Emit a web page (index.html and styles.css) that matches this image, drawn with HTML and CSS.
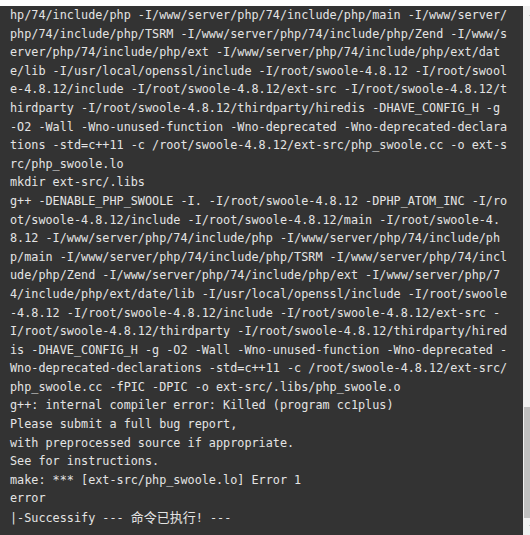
FILE: index.html
```html
<!DOCTYPE html>
<html lang="zh">
<head>
<meta charset="utf-8">
<title>Terminal</title>
<link rel="stylesheet" href="styles.css">
</head>
<body>
<div class="frame">
  <div class="term">
<pre class="log">hp/74/include/php -I/www/server/php/74/include/php/main -I/www/server/
php/74/include/php/TSRM -I/www/server/php/74/include/php/Zend -I/www/s
erver/php/74/include/php/ext -I/www/server/php/74/include/php/ext/dat
e/lib -I/usr/local/openssl/include -I/root/swoole-4.8.12 -I/root/swool
e-4.8.12/include -I/root/swoole-4.8.12/ext-src -I/root/swoole-4.8.12/t
hirdparty -I/root/swoole-4.8.12/thirdparty/hiredis -DHAVE_CONFIG_H -g
-O2 -Wall -Wno-unused-function -Wno-deprecated -Wno-deprecated-declara
tions -std=c++11 -c /root/swoole-4.8.12/ext-src/php_swoole.cc -o ext-s
rc/php_swoole.lo
mkdir ext-src/.libs
g++ -DENABLE_PHP_SWOOLE -I. -I/root/swoole-4.8.12 -DPHP_ATOM_INC -I/ro
ot/swoole-4.8.12/include -I/root/swoole-4.8.12/main -I/root/swoole-4.
8.12 -I/www/server/php/74/include/php -I/www/server/php/74/include/ph
p/main -I/www/server/php/74/include/php/TSRM -I/www/server/php/74/incl
ude/php/Zend -I/www/server/php/74/include/php/ext -I/www/server/php/7
4/include/php/ext/date/lib -I/usr/local/openssl/include -I/root/swoole
-4.8.12 -I/root/swoole-4.8.12/include -I/root/swoole-4.8.12/ext-src -
I/root/swoole-4.8.12/thirdparty -I/root/swoole-4.8.12/thirdparty/hired
is -DHAVE_CONFIG_H -g -O2 -Wall -Wno-unused-function -Wno-deprecated -
Wno-deprecated-declarations -std=c++11 -c /root/swoole-4.8.12/ext-src/
php_swoole.cc -fPIC -DPIC -o ext-src/.libs/php_swoole.o
g++: internal compiler error: Killed (program cc1plus)
Please submit a full bug report,
with preprocessed source if appropriate.
See for instructions.
make: *** [ext-src/php_swoole.lo] Error 1
error</pre>
<div class="log status"><span class="prefix">|-Successify --- </span><span class="cjk">命令已执行</span><span class="suffix">! ---</span></div>
  </div>
  <div class="scroll-clip">
    <div class="scrollbar">
      <div class="arrow arrow-up"></div>
      <div class="track"></div>
      <div class="thumb"></div>
      <div class="arrow arrow-down"></div>
    </div>
  </div>
</div>
</body>
</html>
```
FILE: styles.css
```css
html, body {
  margin: 0;
  padding: 0;
  background: #ffffff;
}

.frame {
  display: flex;
  padding-top: 6px;
  height: 529px;
  width: 530px;
  overflow: hidden;
}

.term {
  width: 523px;
  flex: none;
  background: #333333;
  overflow: hidden;
  box-sizing: border-box;
  padding-left: 10px;
}

.log {
  margin: 0;
  font-family: "DejaVu Sans Mono", monospace;
  font-size: 11.8px;
  line-height: 18.6px;
  color: #e4e4e4;
  white-space: pre;
}

.cjk {
  font-family: "Noto Sans CJK SC", sans-serif;
  font-size: 13px;
}

.scroll-clip {
  width: 7px;
  flex: none;
  overflow: hidden;
  background: #f1f1f1;
}

.scrollbar {
  width: 17px;
  height: 100%;
  display: flex;
  flex-direction: column;
}

.arrow {
  height: 17px;
  flex: none;
  display: flex;
  align-items: center;
  justify-content: center;
}

.arrow::before {
  content: "";
  width: 0;
  height: 0;
  border-left: 3.5px solid transparent;
  border-right: 3.5px solid transparent;
}

.arrow-up::before {
  border-bottom: 3.5px solid #a3a3a3;
}

.arrow-down::before {
  border-top: 3.5px solid #a3a3a3;
}

.track {
  flex: 1;
}

.thumb {
  height: 111px;
  flex: none;
  margin: 0 1px;
  background: #c1c1c1;
}
```
